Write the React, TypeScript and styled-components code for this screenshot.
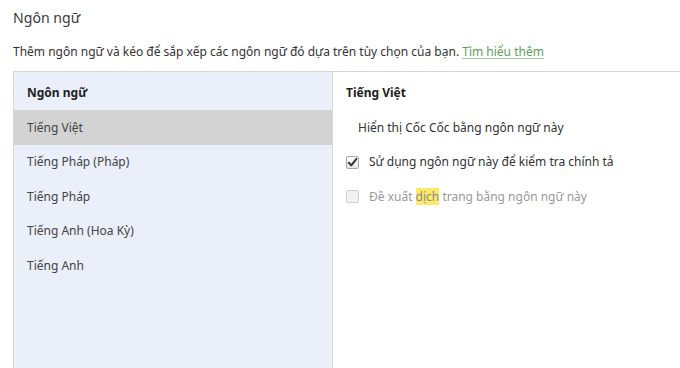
import React from "react";
import styled, { createGlobalStyle } from "styled-components";

const Global = createGlobalStyle`
  html, body { margin: 0; padding: 0; background: #ffffff; }
  body { font-family: "Noto Sans", "Open Sans", sans-serif; color: #333333; }
`;

const Page = styled.div`
  width: 680px;
  height: 368px;
  overflow: hidden;
  padding: 0 0 0 13px;
  box-sizing: border-box;
  display: flex;
  flex-direction: column;
`;

const Title = styled.div`
  margin-top: 8px;
  font-size: 14.1px;
  line-height: 20px;
  color: #3a3a3a;
`;

const Description = styled.div`
  margin-top: 15px;
  font-size: 12px;
  line-height: 18px;
  color: #333;
  white-space: nowrap;
`;

const Link = styled.a`
  color: #5a9e5a;
  text-decoration: underline;
  text-decoration-color: #9cc89c;
  text-underline-offset: 2px;
`;

const Panel = styled.div`
  margin-top: 10px;
  flex: 1;
  display: flex;
  border-top: 1px solid #d6d6d6;
`;

const LeftColumn = styled.div`
  width: 320px;
  box-sizing: border-box;
  background: #eaeff9;
  border-left: 1px solid #d9d9d9;
  border-right: 1px solid #d9d9d9;
  display: flex;
  flex-direction: column;
`;

const ColumnHeader = styled.div`
  height: 38px;
  box-sizing: border-box;
  padding: 3px 0 0 13px;
  display: flex;
  align-items: center;
  font-weight: bold;
  font-size: 12px;
  color: #222;
`;

const LangRow = styled.div<{ $selected?: boolean }>`
  height: 34.5px;
  box-sizing: border-box;
  padding-left: 13px;
  display: flex;
  align-items: center;
  font-size: 12px;
  color: #444;
  background: ${(p) => (p.$selected ? "#d3d3d3" : "transparent")};
`;

const RightColumn = styled.div`
  flex: 1;
  padding-left: 13px;
  display: flex;
  flex-direction: column;
`;

const DetailHeader = styled.div`
  height: 38px;
  box-sizing: border-box;
  padding-top: 3px;
  display: flex;
  align-items: center;
  font-weight: bold;
  font-size: 12px;
  color: #222;
`;

const DetailText = styled.div`
  height: 34.5px;
  padding-left: 12px;
  display: flex;
  align-items: center;
  font-size: 12px;
  color: #333;
`;

const OptionRow = styled.label<{ $disabled?: boolean }>`
  height: 34.5px;
  display: flex;
  align-items: center;
  gap: 10px;
  font-size: 12px;
  color: ${(p) => (p.$disabled ? "#9a9a9a" : "#333")};
`;

const Box = styled.span<{ $disabled?: boolean }>`
  width: 13px;
  height: 13px;
  margin-top: 1px;
  box-sizing: border-box;
  border-radius: 2px;
  border: 1px solid ${(p) => (p.$disabled ? "#d2d2d2" : "#a9a9a9")};
  background: ${(p) =>
    p.$disabled ? "#f2f2f2" : "linear-gradient(#fdfdfd, #e6e6e6)"};
  display: flex;
  align-items: center;
  justify-content: center;
`;

const Highlight = styled.span`
  background: #fce96a;
  color: #8a8a8a;
`;

const langs = [
  "Tiếng Việt",
  "Tiếng Pháp (Pháp)",
  "Tiếng Pháp",
  "Tiếng Anh (Hoa Kỳ)",
  "Tiếng Anh",
];

export default function App() {
  return (
    <>
      <Global />
      <Page>
        <Title>Ngôn ngữ</Title>
        <Description>
          Thêm ngôn ngữ và kéo để sắp xếp các ngôn ngữ đó dựa trên tùy chọn của bạn.{" "}
          <Link>Tìm hiểu thêm</Link>
        </Description>
        <Panel>
          <LeftColumn>
            <ColumnHeader>Ngôn ngữ</ColumnHeader>
            {langs.map((l, i) => (
              <LangRow key={l} $selected={i === 0}>
                {l}
              </LangRow>
            ))}
          </LeftColumn>
          <RightColumn>
            <DetailHeader>Tiếng Việt</DetailHeader>
            <DetailText>Hiển thị Cốc Cốc bằng ngôn ngữ này</DetailText>
            <OptionRow>
              <Box>
                <svg width="11" height="11" viewBox="0 0 11 11">
                  <path d="M1.8 5.8 L4.3 8.4 L9.4 1.8" fill="none" stroke="#333" strokeWidth="2" strokeLinecap="round" strokeLinejoin="round" />
                </svg>
              </Box>
              Sử dụng ngôn ngữ này để kiểm tra chính tả
            </OptionRow>
            <OptionRow $disabled>
              <Box $disabled />
              <span>
                Đề xuất <Highlight>dịch</Highlight> trang bằng ngôn ngữ này
              </span>
            </OptionRow>
          </RightColumn>
        </Panel>
      </Page>
    </>
  );
}
